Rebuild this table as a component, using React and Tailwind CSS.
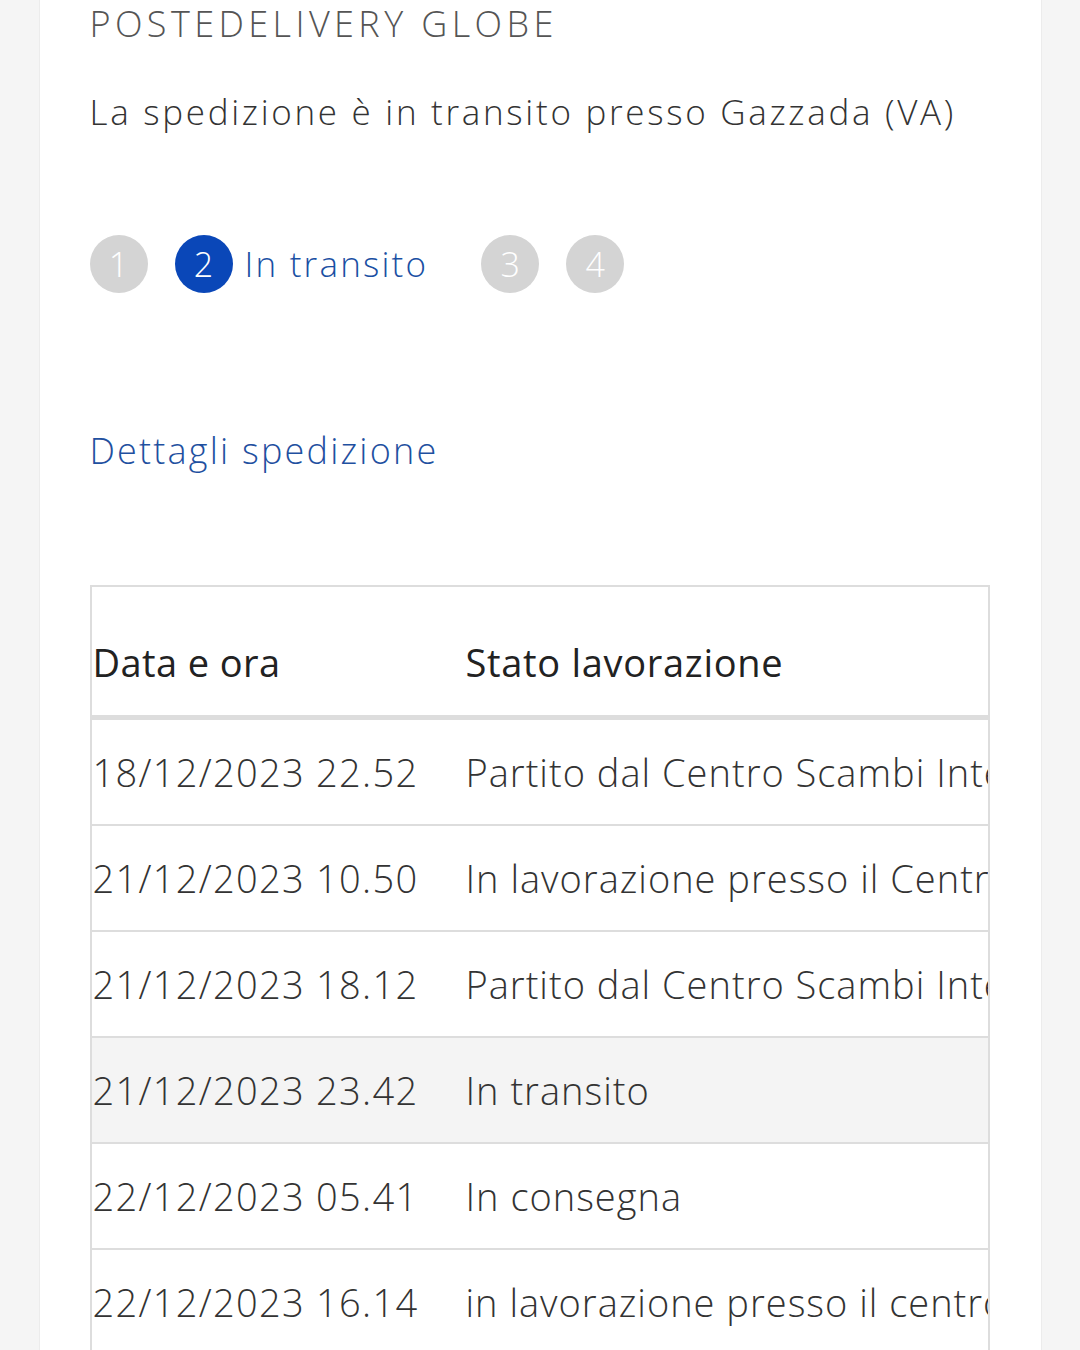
export default function App() {
  const rows = [
    ["18/12/2023 22.52", "Partito dal Centro Scambi Internazionale", false],
    ["21/12/2023 10.50", "In lavorazione presso il Centro Scambi Internazionale", false],
    ["21/12/2023 18.12", "Partito dal Centro Scambi Internazionale", false],
    ["21/12/2023 23.42", "In transito", true],
    ["22/12/2023 05.41", "In consegna", false],
    ["22/12/2023 16.14", "in lavorazione presso il centro di smistamento", false],
  ];
  return (
    <div className="w-[1080px] h-[1350px] overflow-hidden bg-[#f5f5f5] flex justify-center" style={{ fontFamily: '"Open Sans", sans-serif' }}>
      <div className="w-[1003px] h-full bg-white border-x border-[#ececec] pl-[50px] pt-[6px] flex flex-col">
        <div className="text-[36px] leading-[36px] font-light text-[#555] tracking-[4.4px]">POSTEDELIVERY GLOBE</div>
        <div className="mt-[52px] text-[35px] leading-[35px] font-light text-[#333] tracking-[2.7px] whitespace-nowrap">La spedizione è in transito presso Gazzada (VA)</div>
        <div className="mt-[106px] flex items-center h-[58px]">
          <div className="w-[58px] h-[58px] rounded-full bg-[#d4d4d4] text-white flex items-center justify-center text-[34px] font-light">1</div>
          <div className="ml-[27px] w-[58px] h-[58px] rounded-full bg-[#0a47b8] text-white flex items-center justify-center text-[34px] font-light">2</div>
          <div className="ml-[12px] text-[35px] font-light text-[#1a4fa3] tracking-[2.2px]">In transito</div>
          <div className="ml-[53px] w-[58px] h-[58px] rounded-full bg-[#d4d4d4] text-white flex items-center justify-center text-[34px] font-light">3</div>
          <div className="ml-[27px] w-[58px] h-[58px] rounded-full bg-[#d4d4d4] text-white flex items-center justify-center text-[34px] font-light">4</div>
        </div>
        <div className="mt-[140px] text-[36px] leading-[36px] font-light text-[#1f50a0] tracking-[2.2px]">Dettagli spedizione</div>
        <div className="mt-[116px] w-[900px] border-2 border-b-0 border-[#dddddd] overflow-hidden">
          <div className="h-[133px] pt-[22px] grid grid-cols-[373px_1fr] items-center border-b-[5px] border-[#dddddd] pl-[1px] text-[38px] font-medium text-[#222] whitespace-nowrap">
            <div className="tracking-[0.4px]">Data e ora</div>
            <div className="tracking-[0.7px]">Stato lavorazione</div>
          </div>
          {rows.map(([d, s, hl], i) => (
            <div key={i} className={`h-[106px] grid grid-cols-[373px_1fr] items-center border-b-2 border-[#dddddd] pl-[1px] text-[38px] font-light text-[#333] whitespace-nowrap ${hl ? "bg-[#f4f4f4]" : "bg-white"}`}>
              <div className="tracking-[1.3px]">{d}</div>
              <div className="overflow-hidden tracking-[1px]">{s}</div>
            </div>
          ))}
        </div>
      </div>
    </div>
  );
}
